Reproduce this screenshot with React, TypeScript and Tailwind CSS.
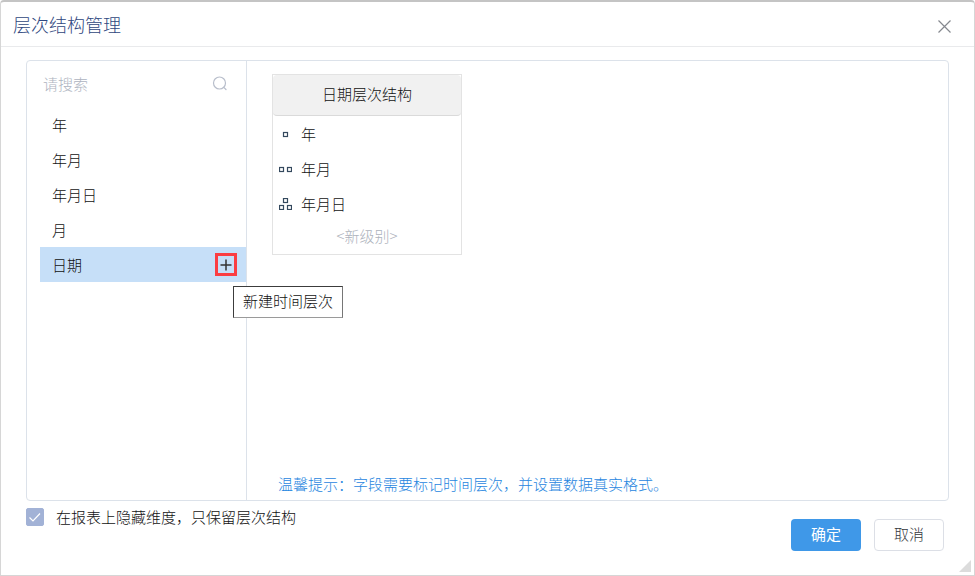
import { useState } from 'react';

const fields = ['年', '年月', '年月日', '月', '日期'];

const levels = [
  { name: '年', squares: [[4, 4]] },
  { name: '年月', squares: [[0, 4], [8, 4]] },
  { name: '年月日', squares: [[4, 0], [0, 7], [8, 7]] },
];

function LevelIcon({ squares }: { squares: number[][] }) {
  return (
    <svg className="w-[13px] h-3 shrink-0" viewBox="0 0 13 12" fill="none" stroke="#34495e" strokeWidth="1.2" aria-hidden="true">
      {squares.map(([x, y]) => (
        <rect key={`${x}-${y}`} x={x + 0.5} y={y + 0.5} width="4" height="4" />
      ))}
    </svg>
  );
}

function FieldList() {
  const [query, setQuery] = useState('');
  const [selected, setSelected] = useState('日期');

  return (
    <aside className="w-[220px] shrink-0 border-r border-[#dce2ea] pl-[13px]">
      <div className="flex items-center h-[46px] pl-[3px] pr-[18px]">
        <input
          type="text"
          aria-label="请搜索"
          placeholder="请搜索"
          value={query}
          onChange={e => setQuery(e.target.value)}
          className="flex-1 min-w-0 outline-none bg-transparent placeholder:text-[#adb3c0]"
        />
        <svg className="w-4 h-4 shrink-0" viewBox="0 0 16 16" fill="none" stroke="#b8becb" strokeWidth="1.2" strokeLinecap="round" aria-hidden="true">
          <circle cx="7.5" cy="7" r="6" />
          <path d="M11.8 11.4 L14 13.5" />
        </svg>
      </div>

      <ul>
        {fields.filter(f => f.includes(query)).map(field => (
          <li
            key={field}
            className={`relative flex items-center h-[35px] pr-[9px] ${field === selected ? 'bg-[#c6dff8]' : ''}`}
          >
            <button type="button" onClick={() => setSelected(field)} className="flex-1 h-full pl-3 text-left">
              {field}
            </button>
            {field === selected && (
              <>
                <button
                  type="button"
                  aria-label="新建时间层次"
                  className="flex items-center justify-center w-[22px] h-[23px] border-3 border-[#fb3d42]"
                >
                  <svg className="w-3 h-3" viewBox="0 0 12 12" fill="none" stroke="#333" strokeWidth="1.5" aria-hidden="true">
                    <path d="M6 0.5 V11.5 M0.5 6 H11.5" />
                  </svg>
                </button>
                <div
                  role="tooltip"
                  className="absolute z-10 left-[193px] top-[39px] h-8 px-[9px] pb-[2px] flex items-center whitespace-nowrap bg-white border border-[#3c3c3c] border-r-[#767676] border-b-[#9a9a9a]"
                >
                  新建时间层次
                </div>
              </>
            )}
          </li>
        ))}
      </ul>
    </aside>
  );
}

function HierarchyCard() {
  return (
    <div className="w-[190px] border border-[#e3e3e3]">
      <h2 className="flex items-center justify-center h-[41px] pb-[2px] bg-[#f1f1f1] border-b border-[#dadada] rounded">
        日期层次结构
      </h2>
      <ul>
        {levels.map(level => (
          <li key={level.name} className="flex items-center gap-[9px] h-[35px] pl-[6px]">
            <LevelIcon squares={level.squares} />
            <span>{level.name}</span>
          </li>
        ))}
      </ul>
      <button type="button" className="block w-full h-[33px] pb-1 text-[#adb2bc]">
        &lt;新级别&gt;
      </button>
    </div>
  );
}

export default function App() {
  const [hidden, setHidden] = useState(true);

  return (
    <div className="relative min-h-screen flex flex-col bg-white border border-[#d6d6d6] border-t-2 border-t-[#c4c4c4] rounded-t font-['Noto_Sans_CJK_SC',sans-serif] font-light text-[15px] leading-5 text-[#111]">
      <header className="flex items-center justify-between h-[45px] pl-3 pr-[23px] border-b border-[#e9eaec]">
        <h1 className="text-lg text-[#2f4780]">层次结构管理</h1>
        <button type="button" aria-label="关闭" className="pt-1">
          <svg className="w-[13px] h-[13px]" viewBox="0 0 13 13" fill="none" stroke="#85888f" strokeWidth="1.2" aria-hidden="true">
            <path d="M0.5 0.5 L12.5 12.5 M12.5 0.5 L0.5 12.5" />
          </svg>
        </button>
      </header>

      <main className="flex-1 flex mt-[13px] mx-[25px] border border-[#dce2ea] rounded">
        <FieldList />
        <section className="flex-1 flex flex-col justify-between pl-[25px] pt-[13px] pb-[6px]">
          <HierarchyCard />
          <p className="pl-[6px] text-[#1f86e0]">温馨提示：字段需要标记时间层次，并设置数据真实格式。</p>
        </section>
      </main>

      <footer className="flex items-start justify-between h-[74px] pl-[25px] pr-[30px]">
        <label className="flex items-center gap-3 pt-[6px]">
          <span className="grid">
            <input
              type="checkbox"
              checked={hidden}
              onChange={e => setHidden(e.target.checked)}
              className="col-start-1 row-start-1 appearance-none w-[18px] h-[18px] rounded-xs border border-[#a2b2d6] checked:bg-[#a2b2d6]"
            />
            {hidden && (
              <svg className="col-start-1 row-start-1 w-[18px] h-[18px] pointer-events-none" viewBox="0 0 18 18" fill="none" stroke="#fff" strokeWidth="1.2" aria-hidden="true">
                <path d="M3.5 9.5 L7 13 L14 5.5" />
              </svg>
            )}
          </span>
          在报表上隐藏维度，只保留层次结构
        </label>
        <div className="flex gap-[13px] pt-[18px]">
          <button type="button" className="w-[70px] h-8 pb-[2px] rounded bg-[#3f98e8] font-normal text-white">
            确定
          </button>
          <button type="button" className="w-[70px] h-8 pb-[2px] rounded border border-[#dcdfe6] text-[#33363b]">
            取消
          </button>
        </div>
      </footer>

      <svg className="absolute right-[3px] bottom-[3px] w-3 h-3" viewBox="0 0 12 12" fill="#dcdcdc" aria-hidden="true">
        <path d="M12 0 V12 H0 Z" />
      </svg>
    </div>
  );
}
